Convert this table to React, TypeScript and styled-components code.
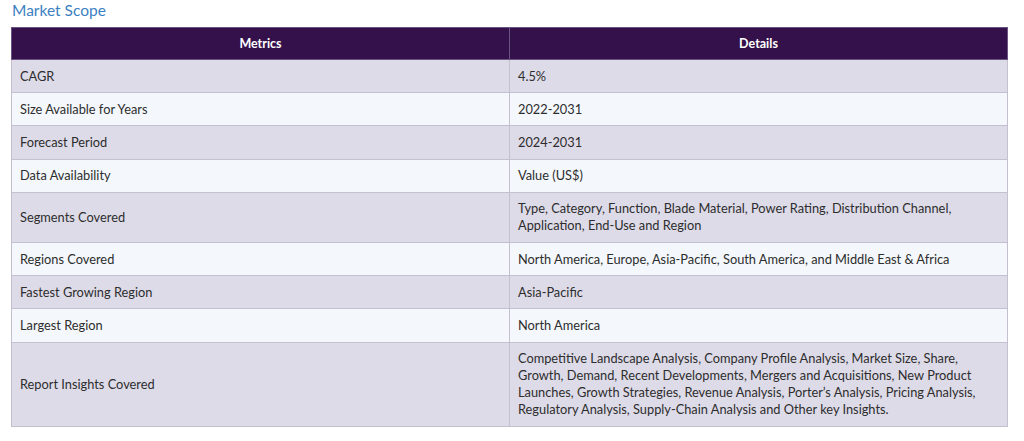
import React from 'react';
import styled, { createGlobalStyle } from 'styled-components';

const GlobalStyle = createGlobalStyle`
  body {
    margin: 0;
    background: #fff;
    font-family: Lato, "Open Sans", sans-serif;
  }
`;

const Page = styled.div`
  padding: 0 16px 0 11px;
`;

const Title = styled.h3`
  margin: 0 0 7px 1px;
  font-size: 15.5px;
  line-height: 20px;
  font-weight: 400;
  color: #3c7fc2;
`;

const Table = styled.table`
  width: 997px;
  border-collapse: collapse;
  table-layout: fixed;
  font-size: 12.8px;
  color: #2d2d2d;
`;

const HeadCell = styled.th`
  background: #35114b;
  color: #fff;
  font-weight: 700;
  font-size: 12.5px;
  height: 31px;
  padding: 0 8px;
  text-align: center;
  border: 1px solid #6a5580;
`;

const Row = styled.tr<{ $odd: boolean }>`
  background: ${(p) => (p.$odd ? '#dedbe8' : '#f4f8fc')};
`;

const Cell = styled.td`
  padding: 7.6px 8px;
  line-height: 17px;
  vertical-align: middle;
  border: 1px solid #c4c0d0;
`;

const rows: [string, string][] = [
  ['CAGR', '4.5%'],
  ['Size Available for Years', '2022-2031'],
  ['Forecast Period', '2024-2031'],
  ['Data Availability', 'Value (US$)'],
  [
    'Segments Covered',
    'Type, Category, Function, Blade Material, Power Rating, Distribution Channel, Application, End-Use and Region',
  ],
  ['Regions Covered', 'North America, Europe, Asia-Pacific, South America, and Middle East & Africa'],
  ['Fastest Growing Region', 'Asia-Pacific'],
  ['Largest Region', 'North America'],
  [
    'Report Insights Covered',
    'Competitive Landscape Analysis, Company Profile Analysis, Market Size, Share, Growth, Demand, Recent Developments, Mergers and Acquisitions, New Product Launches, Growth Strategies, Revenue Analysis, Porter\u2019s Analysis, Pricing Analysis, Regulatory Analysis, Supply-Chain Analysis and Other key Insights.',
  ],
];

export default function App() {
  return (
    <>
      <GlobalStyle />
      <Page>
        <Title>Market Scope</Title>
        <Table>
          <thead>
            <tr>
              <HeadCell>Metrics</HeadCell>
              <HeadCell>Details</HeadCell>
            </tr>
          </thead>
          <tbody>
            {rows.map(([metric, detail], i) => (
              <Row key={metric} $odd={i % 2 === 0}>
                <Cell>{metric}</Cell>
                <Cell>{detail}</Cell>
              </Row>
            ))}
          </tbody>
        </Table>
      </Page>
    </>
  );
}
